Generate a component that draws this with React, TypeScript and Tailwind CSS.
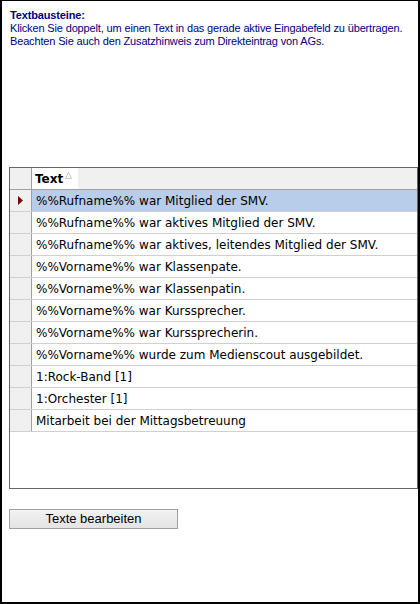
import React from 'react';

const rows = [
  '%%Rufname%% war Mitglied der SMV.',
  '%%Rufname%% war aktives Mitglied der SMV.',
  '%%Rufname%% war aktives, leitendes Mitglied der SMV.',
  '%%Vorname%% war Klassenpate.',
  '%%Vorname%% war Klassenpatin.',
  '%%Vorname%% war Kurssprecher.',
  '%%Vorname%% war Kurssprecherin.',
  '%%Vorname%% wurde zum Medienscout ausgebildet.',
  '1:Rock-Band [1]',
  '1:Orchester [1]',
  'Mitarbeit bei der Mittagsbetreuung',
];

export default function App() {
  return (
    <div className="w-[420px] h-[604px] bg-white border-l-2 border-r-2 border-b-2 border-t border-black flex flex-col font-['Liberation_Sans',Arial,sans-serif]">
      <div className="pl-[8px] pt-[8px] text-[#000080] text-[11px] leading-[13px] tracking-[-0.15px]">
        <div className="font-bold">Textbausteine:</div>
        <div>Klicken Sie doppelt, um einen Text in das gerade aktive Eingabefeld zu übertragen.</div>
        <div>Beachten Sie auch den Zusatzhinweis zum Direkteintrag von AGs.</div>
      </div>

      <div className="ml-[7px] mt-[119px] w-[409px] h-[322px] border border-[#646464] flex flex-col font-['DejaVu_Sans',sans-serif] text-black">
        <div className="flex h-[22px] shrink-0 border-b border-[#a0a0a0] bg-[#f0f0f0]">
          <div className="w-[22px] shrink-0 border-r border-[#a0a0a0]" />
          <div className="flex items-center pl-[3px] pr-[6px] bg-white font-bold text-[12px]">
            Text
            <svg width="7" height="7" viewBox="0 0 7 7" className="ml-[2px] -mt-[6px]">
              <path d="M3.5 0.5 L6.5 6.5 L0.5 6.5 Z" fill="none" stroke="#c8c8c8" strokeWidth="1" />
            </svg>
          </div>
          <div className="flex-1" />
        </div>
        {rows.map((r, i) => (
          <div key={i} className="flex h-[22px] shrink-0 border-b border-[#d0d0d0]">
            <div className="w-[22px] shrink-0 bg-[#f0f0f0] border-r border-[#a0a0a0] flex items-center justify-center">
              {i === 0 && (
                <svg width="5" height="9" viewBox="0 0 5 9">
                  <path d="M0 0 L5 4.5 L0 9 Z" fill="#800000" />
                </svg>
              )}
            </div>
            <div className={`flex-1 flex items-center pl-[4px] text-[12px] ${i === 0 ? 'bg-[#b8cde9]' : 'bg-white'}`}>
              {r}
            </div>
          </div>
        ))}
        <div className="flex-1" />
      </div>

      <div className="ml-[7px] mt-[20px] w-[169px] h-[20px] border border-[#a0a0a0] bg-gradient-to-b from-[#f2f2f2] to-[#e4e4e4] flex items-center justify-center text-[13px] text-black">
        Texte bearbeiten
      </div>
    </div>
  );
}
